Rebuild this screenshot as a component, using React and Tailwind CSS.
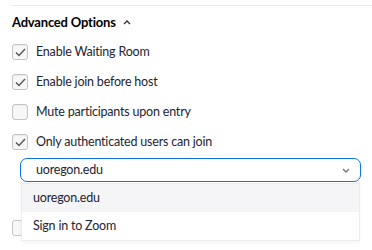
import React from "react";

const Check = () => (
  <svg width="11" height="9" viewBox="0 0 11 9" className="block">
    <path d="M1 4.5 L4 7.5 L10 1" fill="none" stroke="#5a5a5a" strokeWidth="1.5" />
  </svg>
);

function Row({ checked, label }) {
  return (
    <div className="flex items-center h-[16px]">
      <div className="w-[16px] h-[16px] rounded-[3px] border border-[#c4c4c4] bg-[#f7f7f7] flex items-center justify-center shadow-[inset_0_1px_1px_rgba(0,0,0,0.05)]">
        {checked && <Check />}
      </div>
      <span className="ml-[8px] text-[12.5px] tracking-[-0.2px] text-[#232333] leading-none">{label}</span>
    </div>
  );
}

export default function App() {
  return (
    <div className="w-[372px] h-[250px] bg-white overflow-hidden relative" style={{ fontFamily: 'Lato, "Open Sans", sans-serif' }}>
      <div className="ml-[11px] mt-[5px] h-px bg-[#ececec]" />
      <div className="ml-[12px] mt-[9px] flex items-center h-[14px]">
        <span className="text-[13px] tracking-[-0.2px] font-bold text-[#000] leading-none">Advanced Options</span>
        <svg width="8" height="5" viewBox="0 0 8 5" className="ml-[7px]">
          <path d="M1 4 L4 1 L7 4" fill="none" stroke="#333" strokeWidth="1.4" />
        </svg>
      </div>
      <div className="ml-[12px] mt-[15px] flex flex-col gap-[14px]">
        <Row checked label="Enable Waiting Room" />
        <Row checked label="Enable join before host" />
        <Row label="Mute participants upon entry" />
        <Row checked label="Only authenticated users can join" />
      </div>
      <div className="ml-[20px] mt-[8px] w-[341px] h-[24px] rounded-[7px] border border-[#0e72ed] flex items-center justify-between pl-[15px] pr-[10px]">
        <span className="text-[12.5px] tracking-[-0.2px] text-[#232333] leading-none">uoregon.edu</span>
        <svg width="8" height="5" viewBox="0 0 8 5">
          <path d="M1 1 L4 4 L7 1" fill="none" stroke="#747487" strokeWidth="1.4" />
        </svg>
      </div>
      <div className="ml-[12px] mt-[38px]">
        <div className="w-[16px] h-[16px] rounded-[3px] border border-[#c4c4c4] bg-[#f7f7f7]" />
      </div>
      <div className="absolute left-[21px] top-[183px] w-[339px] bg-white border border-[#ececec] shadow-[0_2px_4px_rgba(0,0,0,0.04)]">
        <div className="h-[28px] bg-[#f5f5f7] flex items-center pl-[11px] text-[12.5px] tracking-[-0.2px] text-[#232333]">uoregon.edu</div>
        <div className="h-[28px] flex items-center pl-[11px] text-[12.5px] tracking-[-0.2px] text-[#232333]">Sign in to Zoom</div>
      </div>
    </div>
  );
}
